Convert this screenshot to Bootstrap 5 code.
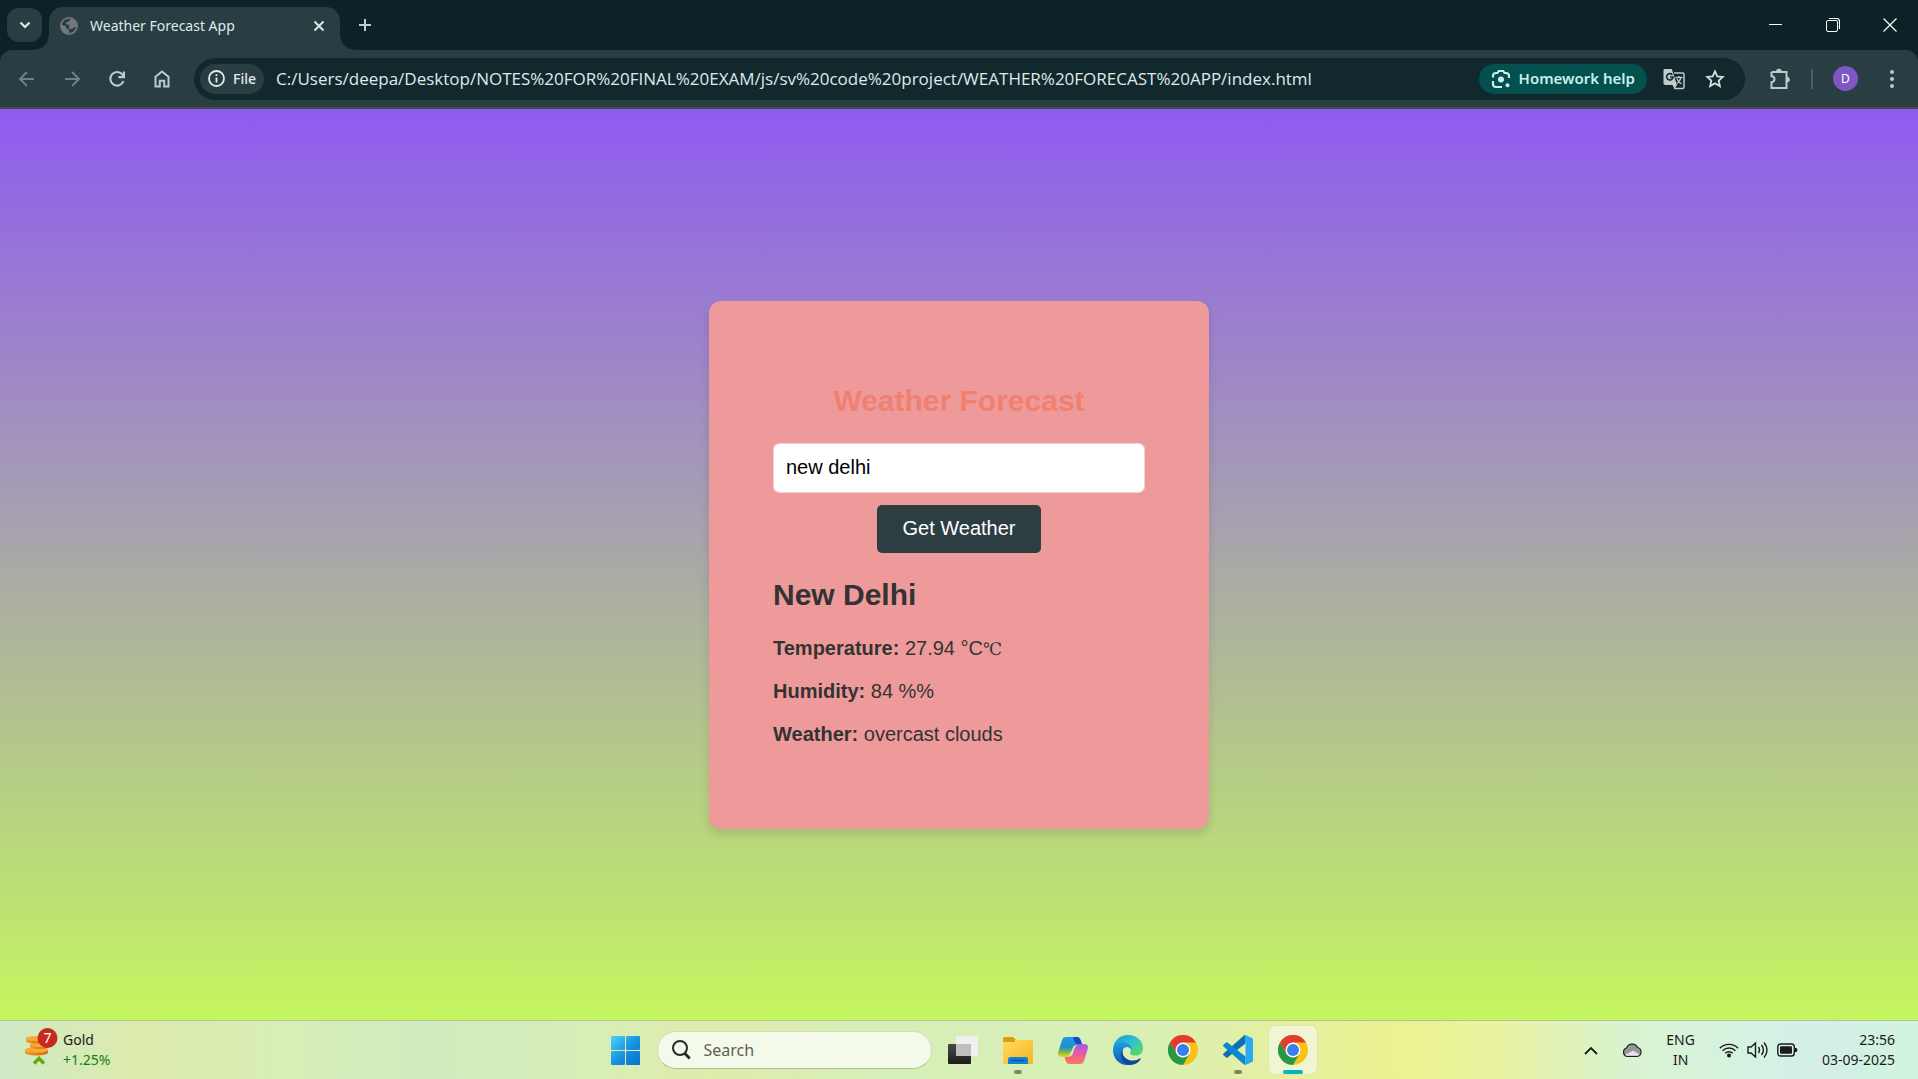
<!DOCTYPE html>
<html lang="en">
<head>
<meta charset="utf-8">
<meta name="viewport" content="width=device-width, initial-scale=1">
<title>Weather Forecast App</title>
<link href="https://cdn.jsdelivr.net/npm/bootstrap@5.3.0/dist/css/bootstrap.min.css" rel="stylesheet">
<style>
  :root { --strip: #0b2327; --bar: #283e42; --omni: #11292d; --ui: "Segoe UI", "Noto Sans", "Open Sans", sans-serif; }
  body { font-family: var(--ui); overflow: hidden; }
  svg { display: block; flex: none; }
  button.plain { background: none; border: 0; padding: 0; color: inherit; display: flex; align-items: center; justify-content: center; flex: none; }

  /* tab strip */
  .tab-strip { background: var(--strip); height: 50px; color: #dfe9ea; }
  button.tab-search { width: 35px; height: 34px; border-radius: 12px; background: var(--bar); margin: 0 7px; }
  .browser-tab { position: relative; align-self: flex-end; width: 291px; height: 43px; background: var(--bar); border-radius: 14px 14px 0 0; font-size: 14px; padding: 0 10px 6px 11px; }
  .browser-tab::before, .browser-tab::after { content: ""; position: absolute; bottom: 0; width: 14px; height: 14px; }
  .browser-tab::before { right: 100%; background: radial-gradient(circle at 0 0, transparent 13px, var(--bar) 14px); }
  .browser-tab::after { left: 100%; background: radial-gradient(circle at 100% 0, transparent 13px, var(--bar) 14px); }
  .win-buttons button { width: 57px; height: 48px; }

  /* toolbar */
  .tool-wrap { background: var(--strip); }
  .toolbar { background: var(--bar); border-radius: 12px 12px 0 0; height: 59px; border-bottom: 2px solid #444c4e; color: #b9cdcf; padding-left: 4px; }
  .toolbar .nav-buttons button { width: 45px; height: 42px; }
  .nav-buttons button:disabled { color: #6f8184; }
  .omnibox { background: var(--omni); border-radius: 21px; height: 42px; padding: 0 20px 0 6px; color: #dfe9ea; margin-left: 10px; }
  button.chip { height: 30px; border-radius: 15px; background: var(--bar); font-size: 14px; font-weight: 500; color: #e2ebec; }
  button.chip-help { background: #04504f; color: #c9f0ee; font-size: 15px; font-weight: 600; }
  .url-box { background: none; border: 0; outline: 0; color: #dfe9ea; font-family: "Segoe UI", "Open Sans", "Noto Sans", sans-serif; font-size: 17px; min-width: 0; padding: 0; }
  button.avatar { width: 25px; height: 25px; background: #7e57c2; color: #fff; font-size: 12px; }
  .bar-divider { width: 2px; height: 20px; background: #4a6064; margin: 0 20px; }

  /* weather page */
  .page-view { background: linear-gradient(180deg, #8f5bf0, #c4f65f); font-family: Arial, "Liberation Sans", sans-serif; }
  .weather-card { width: 500px; padding: 83px 64px; border-radius: 12px; background: #ef9a9a; box-shadow: 0 5px 10px rgba(0,0,0,.12); color: #333; font-size: 20px; line-height: 23px; }
  .weather-card h1 { font-size: 30px; line-height: 34px; font-weight: 700; color: #f08070; margin-bottom: 25px; }
  .weather-card h2 { font-size: 30px; line-height: 34px; font-weight: 700; margin: 25px 0; }
  .weather-card p { margin-bottom: 20px; }
  .weather-card p:last-child { margin-bottom: 0; }
  .city-box { height: 50px; border: 1px solid #f3cfcf; border-radius: 6px; font-size: 20px; padding: 0 12px; color: #000; margin-bottom: 12px; }
  .get-btn { width: 164px; height: 48px; background: #2d3e43; color: #fff; border: 0; border-radius: 5px; font-size: 20px; line-height: 23px; padding: 0; }
  .unit { font-family: "DejaVu Serif", "Noto Sans CJK SC", serif; font-size: 17px; line-height: 20px; }

  /* taskbar */
  .task-bar { display: grid; grid-template-columns: 1fr auto 1fr; align-items: center; height: 59px; border-top: 1px solid #b3c0a4; font-size: 14px; line-height: 20px; color: #1b1b1b;
    background: linear-gradient(90deg, #cfeac6 0, #dcebac 7%, #d8eeb6 15%, #d0ebbe 22%, #d8eeb6 31%, #dfecaa 37%, #d6efb8 46%, #d9efb4 60%, #e6f0a0 67%, #ecf290 73%, #e9f3a0 78%, #d9f3d0 85%, #d4f2e4 92%, #d3efe8 95%, #d0f4dc 100%); }
  .widget { padding-left: 24px; gap: 4px; }
  .up { color: #128012; }
  .task-apps { gap: 7px; }
  .task-apps button { position: relative; width: 48px; height: 48px; border-radius: 5px; }
  .task-apps button.active-app { background: #f0f6d4; box-shadow: 0 0 1px #a8b090; }
  .running::after { content: ""; position: absolute; bottom: 0; left: 20px; width: 8px; height: 4px; border-radius: 2px; background: #7d8767; }
  .active-app::after { left: 14px; width: 20px; background: #00b7c3; }
  .task-search { width: 275px; height: 38px; border-radius: 19px; background: #f4faea; border: 1px solid #d3deb8; border-bottom-color: #adbd95; padding-left: 14px; gap: 13px; }
  .task-search input { border: 0; background: none; outline: 0; width: 180px; padding: 0; font-size: 16px; }
  .task-search input::placeholder { color: #5c6156; opacity: 1; }
  .tray { padding-right: 23px; }
</style>
</head>
<body class="vh-100 d-flex flex-column">

<header>
  <div class="tab-strip d-flex align-items-center">
    <button class="plain tab-search" aria-label="Search tabs"><svg width="14" height="14" viewBox="0 0 14 14" fill="none" stroke="currentColor" stroke-width="2.2"><path d="M2.5 4.5 7 9l4.500-4.500"/></svg></button>
    <div class="browser-tab d-flex align-items-center">
      <svg width="18" height="18" viewBox="0 0 18 18"><circle cx="9" cy="9" r="9" fill="#75767b"/><path d="M11 1.800C9.500 2.500 10 4 8.500 4.500S5.500 5 6 6.500s3 .5 3.500 2-1 1.500-.5 3 2 .5 3.500 0 1.500-2 3.500-1.500c-.6 3.200-3.300 6-7 6 0-1.500.5-2.500-.5-3.500S6 11.500 6 10 3.500 8.500 2 8C2.300 4.500 5 1.800 9 1.800z" fill="#283e42"/></svg>
      <span class="flex-grow-1 ps-2 ms-1">Weather Forecast App</span>
      <button class="plain" aria-label="Close tab"><svg width="22" height="22" viewBox="0 0 22 22" stroke="currentColor" stroke-width="1.900"><path d="m6.500 6.500 9 9m0-9-9 9"/></svg></button>
    </div>
    <button class="plain ms-3" aria-label="New tab"><svg width="18" height="18" viewBox="0 0 18 18" stroke="#b9d0d2" stroke-width="2"><path d="M9 3v12M3 9h12"/></svg></button>
    <div class="win-buttons d-flex ms-auto text-white">
      <button class="plain" aria-label="Minimize"><svg width="14" height="14" stroke="currentColor"><path d="M0 6.500h13"/></svg></button>
      <button class="plain" aria-label="Restore"><svg width="14" height="14" fill="none" stroke="currentColor"><path d="M3 .5h7.500q3 0 3 3V11" stroke-width="1.200"/><rect x=".5" y="2.500" width="11" height="11" rx="1.500"/></svg></button>
      <button class="plain" aria-label="Close"><svg width="14" height="14" stroke="currentColor" stroke-width="1.200"><path d="m.5.5 13 13m0-13-13 13"/></svg></button>
    </div>
  </div>
  <div class="tool-wrap">
    <div class="toolbar d-flex align-items-center">
      <div class="nav-buttons d-flex">
        <button class="plain" disabled aria-label="Back"><svg width="20" height="20" viewBox="0 0 20 20" fill="none" stroke="currentColor" stroke-width="1.900"><path d="M17 10H3.500M10 3l-7 7 7 7"/></svg></button>
        <button class="plain" disabled aria-label="Forward"><svg width="20" height="20" viewBox="0 0 20 20" fill="none" stroke="currentColor" stroke-width="1.900"><path d="M3 10h13.500M10 3l7 7-7 7"/></svg></button>
        <button class="plain" aria-label="Reload"><svg width="20" height="20" viewBox="0 0 20 20" fill="none" stroke="currentColor" stroke-width="2.100"><path d="M16.500 12.200A6.800 6.800 0 1 1 15.400 5.500L17 7.600M17 2.500v5.600h-5.600"/></svg></button>
        <button class="plain" aria-label="Home"><svg width="20" height="20" viewBox="0 0 20 20" fill="none" stroke="currentColor" stroke-width="2"><path d="M3.500 7.800 10 2.500l6.500 5.300v9.700h-4.300v-5.700H7.800v5.700H3.500z"/></svg></button>
      </div>
      <div class="omnibox d-flex align-items-center flex-grow-1">
        <button class="plain chip ps-2 pe-2"><svg width="17" height="17" viewBox="0 0 17 17" fill="none" stroke="currentColor" stroke-width="1.800"><circle cx="8.500" cy="8.500" r="7.500"/><path d="M8.500 7.500v5M8.500 4.200V6"/></svg><span class="ps-2">File</span></button>
        <input class="url-box flex-grow-1 ms-2 ps-1" type="text" aria-label="Address" value="C:/Users/deepa/Desktop/NOTES%20FOR%20FINAL%20EXAM/js/sv%20code%20project/WEATHER%20FORECAST%20APP/index.html">
        <button class="plain chip chip-help px-2"><svg class="ms-1" width="20" height="20" viewBox="0 0 20 20" fill="none" stroke="currentColor" stroke-width="2.100"><path d="M2 8.500V7q0-3 3-3h1.500l1.200-2h4.600l1.200 2H15q3 0 3 3v2M2 12v3q0 3 3 3h6"/><circle cx="10" cy="10.500" r="3" fill="currentColor" stroke="none"/><circle cx="16.500" cy="16.200" r="2" fill="currentColor" stroke="none"/></svg><span class="px-1 ms-1">Homework help</span></button>
        <button class="plain ms-3" aria-label="Translate"><svg width="22" height="22" viewBox="0 0 22 22"><path d="M11 5h8.500q1.500 0 1.500 1.500v12.500q0 1.500-1.500 1.500H11" fill="none" stroke="#c0cbcc" stroke-width="1.500"/><path d="M1.500 1h7.300l5.200 16H2.500Q.5 17 .5 15V2q0-1 1-1z" fill="#c0cbcc"/><path d="m9.500 17 2 4 2.500-4z" fill="#c0cbcc"/><path d="M9.300 6.800A3.200 3.200 0 1 0 10 9H7" fill="none" stroke="#11292d" stroke-width="1.600"/><path d="M12.500 9.500h7M16 8v1.500M18 9.500q-1 4-4 6M14 11q1.500 3 4.500 5" fill="none" stroke="#c0cbcc" stroke-width="1.300"/></svg></button>
        <button class="plain ms-3 ps-1" aria-label="Bookmark"><svg width="20" height="20" viewBox="0 0 20 20" fill="none" stroke="#d5dfe0" stroke-width="1.800"><path d="m10 2.300 2.300 5 5.500.6-4.100 3.700 1.200 5.500-4.900-2.800-4.900 2.800 1.200-5.500-4.100-3.700 5.500-.6z"/></svg></button>
      </div>
      <button class="plain ms-4" aria-label="Extensions"><svg width="22" height="22" viewBox="0 0 22 22" fill="none" stroke="currentColor" stroke-width="2"><path d="M2.500 4h15v5.200M2.500 4v4.200a3 3 0 0 1 0 6V20h15v-5.500M17.500 9v6"/><path d="M7.500 3.500a2.400 2.400 0 0 1 4.800 0zM18 9.300a2.300 2.300 0 0 1 0 4.800z" fill="currentColor" stroke-width="1"/></svg></button>
      <span class="bar-divider"></span>
      <button class="plain avatar rounded-circle" aria-label="Profile">D</button>
      <button class="plain ms-4 me-3" aria-label="Menu"><svg width="20" height="20" viewBox="0 0 20 20" fill="currentColor"><circle cx="10" cy="3" r="2"/><circle cx="10" cy="10" r="2"/><circle cx="10" cy="17" r="2"/></svg></button>
    </div>
  </div>
</header>

<main class="page-view flex-grow-1 d-flex align-items-center justify-content-center">
  <section class="weather-card">
    <h1 class="text-center">Weather Forecast</h1>
    <form class="text-center" onsubmit="return false">
      <input class="city-box form-control shadow-none" type="text" value="new delhi" aria-label="City">
      <button class="btn get-btn d-block mx-auto" type="submit">Get Weather</button>
    </form>
    <h2>New Delhi</h2>
    <p><strong>Temperature:</strong> 27.94 °C<span class="unit">℃</span></p>
    <p><strong>Humidity:</strong> 84 %%</p>
    <p><strong>Weather:</strong> overcast clouds</p>
  </section>
</main>

<svg width="0" height="0" class="position-absolute" aria-hidden="true">
  <defs>
    <linearGradient id="winG" gradientUnits="userSpaceOnUse" x1="0" y1="0" x2="29" y2="29"><stop offset="0" stop-color="#4fd4ff"/><stop offset=".5" stop-color="#1994e0"/><stop offset="1" stop-color="#0670cf"/></linearGradient>
    <linearGradient id="foldG" x2="1" y2="1"><stop stop-color="#ffda62"/><stop offset="1" stop-color="#f8b520"/></linearGradient>
    <linearGradient id="edgeG" x2="1" y2="1"><stop stop-color="#1696d8"/><stop offset=".5" stop-color="#34c2cf"/><stop offset="1" stop-color="#5fe04a"/></linearGradient>
    <linearGradient id="edgeB" x2="0" y2="1"><stop stop-color="#1b9de0"/><stop offset="1" stop-color="#0b5cb8"/></linearGradient>
    <linearGradient id="coA" x2="0" y2="1"><stop stop-color="#1c9cf0"/><stop offset=".5" stop-color="#1f8fc4"/><stop offset=".75" stop-color="#7ab648"/><stop offset="1" stop-color="#f2d51f"/></linearGradient>
    <linearGradient id="coB" x2="0" y2="1"><stop stop-color="#a05cf0"/><stop offset=".5" stop-color="#ea5aa0"/><stop offset="1" stop-color="#fb7b55"/></linearGradient>
    <linearGradient id="darkG" x2="0" y2="1"><stop stop-color="#484848"/><stop offset="1" stop-color="#1c1c1c"/></linearGradient>
    <linearGradient id="coinG" x2="1"><stop stop-color="#f09a20"/><stop offset="1" stop-color="#d96b0a"/></linearGradient>
    <symbol id="chrome" viewBox="0 0 30 30">
      <circle cx="15" cy="15" r="15" fill="#fbc116"/>
      <path d="M2 7.500A15 15 0 0 1 28 7.500H15L8.500 18.700z" fill="#e33b2e"/>
      <path d="M2 7.500 8.500 18.700 15 22.500l6.500-3.800L15 30A15 15 0 0 1 2 7.500z" fill="#279847"/>
      <circle cx="15" cy="15" r="7.500" fill="#fff"/><circle cx="15" cy="15" r="6" fill="#3b7ded"/>
    </symbol>
  </defs>
</svg>

<footer class="task-bar">
  <div class="widget d-flex align-items-center">
    <svg width="35" height="44" viewBox="0 0 35 44">
      <g fill="url(#coinG)"><path d="M1 22v2.500c0 4 23 4 23 0V22z"/><ellipse cx="12.500" cy="22" rx="11.500" ry="2.700" fill="#f9a93a"/><path d="M6 16.500v2c0 3.500 19 3.500 19 0v-2z"/><ellipse cx="15.500" cy="16.500" rx="9.500" ry="2.400" fill="#f9a93a"/><path d="M2 10.500V13c0 3.500 20 3.500 20 0v-2.500z"/><ellipse cx="12" cy="10.500" rx="10" ry="2.400" fill="#f9a93a"/></g>
      <path d="m10 35.500 5-5 5 5" fill="none" stroke="#64a80f" stroke-width="3.400"/>
      <circle cx="23.500" cy="10" r="10" fill="#c42b1c"/><text x="23.500" y="15" text-anchor="middle" font-size="14" fill="#fff">7</text>
    </svg>
    <div><div>Gold</div><div class="up">+1.25%</div></div>
  </div>

  <div class="task-apps d-flex align-items-center">
    <button class="plain" aria-label="Start"><svg width="29" height="29" fill="url(#winG)"><rect width="14" height="14" rx="1"/><rect x="15" width="14" height="14" rx="1"/><rect y="15" width="14" height="14" rx="1"/><rect x="15" y="15" width="14" height="14" rx="1"/></svg></button>
    <label class="task-search d-flex align-items-center"><svg width="19" height="20" viewBox="0 0 19 20" fill="none" stroke="#252a26" stroke-width="2"><circle cx="8" cy="8" r="7"/><path d="m12.700 13.200 5 5.300" stroke-width="2.800"/></svg><input type="text" placeholder="Search" aria-label="Search"></label>
    <button class="plain" aria-label="Task view"><svg width="30" height="28" viewBox="0 0 30 28"><rect y="8" width="23" height="20" rx="1" fill="url(#darkG)"/><rect x="8" width="22" height="20" rx="1" fill="#f0f0f2"/><rect x="8" y="8" width="15" height="12" fill="#bfbfc0"/></svg></button>
    <button class="plain running" aria-label="File Explorer"><svg width="30" height="28" viewBox="0 0 30 28"><path d="M0 2.500Q0 1 1.500 1H10l3 3h-1v5H0z" fill="#dd9c0a"/><path d="M0 6h11l2.500-2H29q1 0 1 1v22q0 1-1 1H1q-1 0-1-1z" fill="url(#foldG)"/><path d="M5 28v-4.500Q5 21 7.500 21h15q2.500 0 2.500 2.500V28z" fill="#1380d4"/><path d="M8.500 24.500h13" stroke="#0a4f94" stroke-width="1.200"/></svg></button>
    <button class="plain" aria-label="Copilot"><svg width="30" height="28" viewBox="0 0 30 28"><path d="M8 1h11q2.500 0 3.500 3L24 8h-3q-3 0-4 3l-3 8q-1 2-3 2H4q-5 0-3.700-5L4 4q1-3 4-3z" fill="url(#coA)"/><path d="M15 1h4q2.500 0 3.500 3L24 8h-4q-3 0-4-4z" fill="#1948c4"/><path d="M22 28H11q-2.500 0-3.500-4L6.500 21H10q3 0 4-3l3-8q1-2 3-2h6q5 0 3.700 5L26 25q-1 3-4 3z" fill="url(#coB)"/><path d="M16 9.500h3.500q-2 0-3 3l-2.500 7h-4q2-.5 3-3.500z" fill="#d8eeb6"/></svg></button>
    <button class="plain" aria-label="Edge"><svg width="30" height="30" viewBox="0 0 30 30"><path d="M0 15C0 6 7 0 15 0c9 0 15 6 15 13 0 5-3 7.500-7 7.500-5 0-6.500-1.500-6-3 2-2 1.500-5.500-2-7C9 8.500 2 11 0 15z" fill="url(#edgeG)"/><path d="M0 15C1 9 6 6.500 11.500 7.500c5 1 8 4.500 7 8-1-4-7-5-9 0-2 6 1 12.500 8 14.200C8 31.500 0 25 0 15z" fill="url(#edgeB)"/><path d="M10 14c-2 6 3 11.500 10 11.500 3 0 5-1 6.500-2 1-.5 1.300.4.700 1.300-2.500 3.800-7 5.700-11.700 5.100C8 28 5.500 19 10 14z" fill="#10499a"/></svg></button>
    <button class="plain" aria-label="Chrome"><svg width="30" height="30"><use href="#chrome"/></svg></button>
    <button class="plain running" aria-label="Visual Studio Code"><svg width="30" height="30" viewBox="0 0 30 30"><path d="M22.500 0v8.500L4.500 22.500q-.8.600-1.500 0L.5 20.200q-.8-.8 0-1.600L21 .5q.7-.6 1.500-.5z" fill="#0b70b8"/><path d="M22.500 30v-8.500L4.500 7.500q-.8-.6-1.500 0L.5 9.800q-.8.800 0 1.600L21 29.500q.7.600 1.500.5z" fill="#0d86d3"/><path d="m22.500 0 6.500 3q1 .5 1 1.600v20.800q0 1.100-1 1.600l-6.500 3z" fill="#2ba9f2"/></svg></button>
    <button class="plain running active-app" aria-label="Chrome window"><svg width="30" height="30"><use href="#chrome"/></svg></button>
  </div>

  <div class="tray d-flex align-items-center justify-content-end">
    <button class="plain me-4" aria-label="Hidden icons"><svg width="14" height="9" viewBox="0 0 14 9" fill="none" stroke="currentColor" stroke-width="1.800"><path d="m1 8 6-6 6 6"/></svg></button>
    <button class="plain me-4" aria-label="OneDrive"><svg width="20" height="14" viewBox="0 0 20 14"><path d="M5 13.300a4.300 4.300 0 0 1-.5-8.300 6 6 0 0 1 11-.5A4.500 4.500 0 0 1 15.500 13.300z" fill="#98989b" stroke="#202020" stroke-width="1.200"/><path d="M3 12 11 7.500l6.500 4q-1 1.200-2.500 1.200H5q-1.300 0-2-.7z" fill="#e4e4e8"/></svg></button>
    <div class="text-center me-4">ENG<br>IN</div>
    <button class="plain gap-2" aria-label="Network, volume and battery">
      <svg width="20" height="16" viewBox="0 0 20 16" fill="none" stroke="currentColor" stroke-width="1.400"><path d="M.8 6.200a13 13 0 0 1 18.400 0M3.600 8.700a9 9 0 0 1 12.800 0M6.300 11.200a5.300 5.300 0 0 1 7.400 0"/><circle cx="10" cy="13.500" r="2" fill="currentColor" stroke="none"/></svg>
      <svg width="22" height="18" viewBox="0 0 22 18" fill="none" stroke="currentColor" stroke-width="1.400"><path d="M1 6v6h3l4.500 4V2L4 6zM11.500 6q2 3 0 6M14.500 4q3.800 5 0 10M17 1.500q6 7.500 0 15"/></svg>
      <svg width="21" height="14" viewBox="0 0 21 14"><rect x=".8" y="1" width="16.500" height="12" rx="2.800" fill="none" stroke="currentColor" stroke-width="1.400"/><rect x="3" y="3.200" width="12" height="7.600" rx="1" fill="currentColor"/><path d="M18 4.800q2.500 0 2.500 2.200T18 9.200z" fill="currentColor"/></svg>
    </button>
    <div class="text-end ms-4">23:56<br>03-09-2025</div>
  </div>
</footer>

<script src="https://cdn.jsdelivr.net/npm/bootstrap@5.3.0/dist/js/bootstrap.bundle.min.js"></script>
</body>
</html>
